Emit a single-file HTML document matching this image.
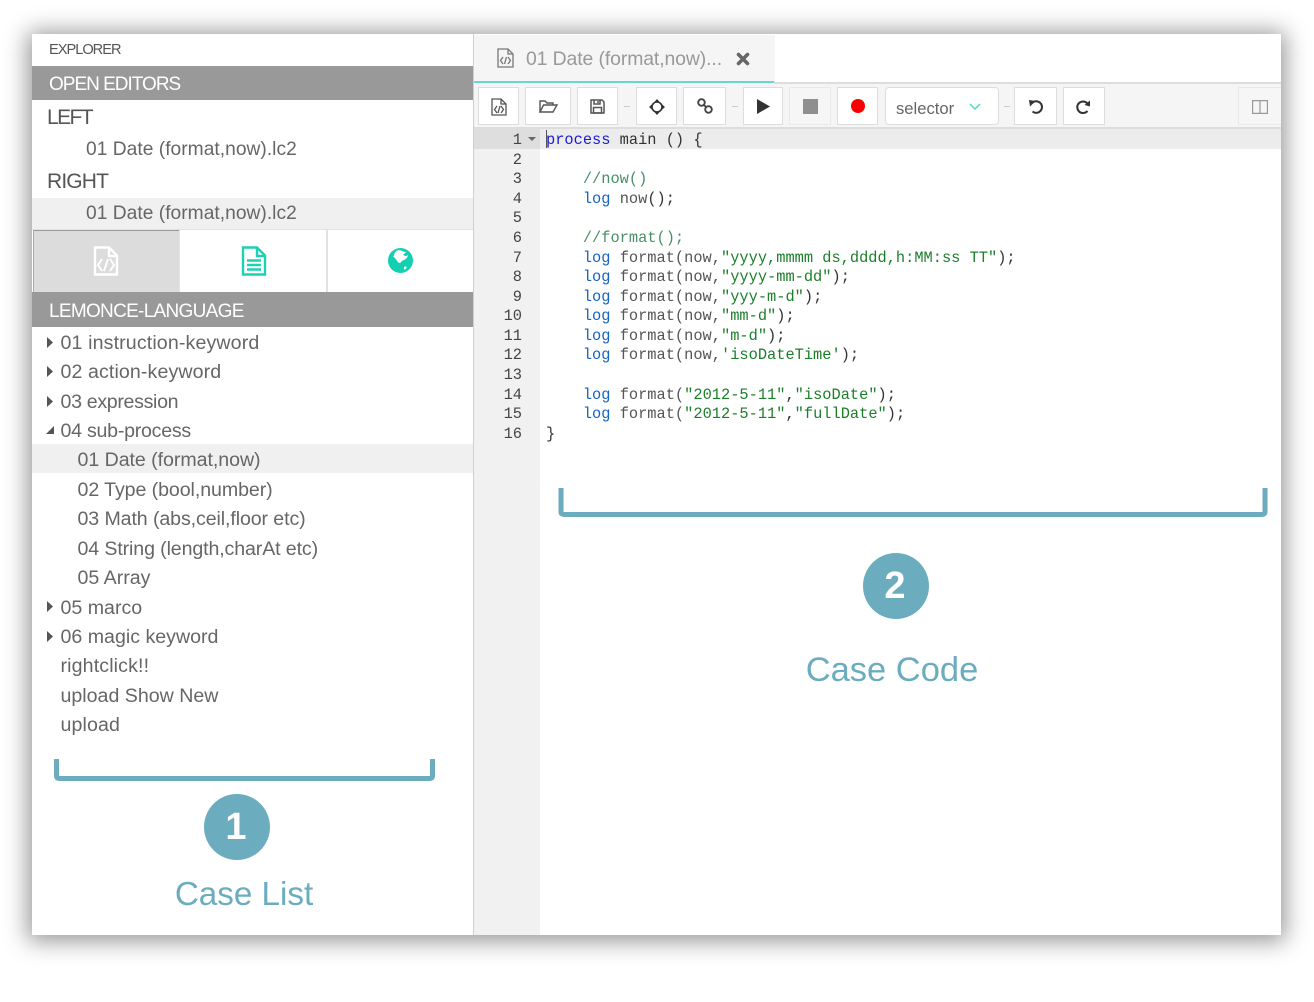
<!DOCTYPE html>
<html><head><meta charset="utf-8">
<style>
html,body{margin:0;padding:0;background:#fff;width:1314px;height:1002px;overflow:hidden}
#root{position:absolute;left:0;top:0;width:1314px;height:1002px;overflow:hidden;font-family:"Liberation Sans",sans-serif}
#panel{position:absolute;left:32px;top:34px;width:1249px;height:901px;background:#fff;box-shadow:0 2px 22px 4px rgba(0,0,0,.42);}
.a{position:absolute}
.t{position:absolute;white-space:nowrap;line-height:30px;height:30px;color:#666;font-size:19.6px;filter:blur(.3px)}
.h{color:#fff;font-size:19px;letter-spacing:-.75px}
.b{position:absolute;top:87px;height:36px;background:#fff;border:1px solid #ddd}
.b.d{background:#f6f6f6;border-color:#e9e9e9}
.dash{position:absolute;top:106px;width:6px;height:1px;background:#ccc}
.ln{position:absolute;width:48px;left:474px;text-align:right;font:15.35px/20px "Liberation Mono",monospace;color:#444;white-space:pre;filter:blur(.3px)}
.c{position:absolute;left:546px;font:15.35px/20px "Liberation Mono",monospace;color:#333;white-space:pre;filter:blur(.3px)}
.k{color:#1a1ad6}.l{color:#1565c0}.s{color:#1b7f2a}.m{color:#4a8f66}.n{color:#555}
svg{position:absolute;overflow:visible}
</style></head><body><div id="root">
<div id="panel"></div>

<!-- sidebar -->
<div class="a" style="left:473px;top:34px;width:1px;height:901px;background:#cfcfcf"></div>
<div class="t" style="left:49px;top:35px;font-size:14.6px;letter-spacing:-1px;color:#555">EXPLORER</div>
<div class="a" style="left:32px;top:66px;width:441px;height:34px;background:#999"></div>
<div class="t h" style="left:49px;top:70px;letter-spacing:-1px">OPEN EDITORS</div>
<div class="t" style="left:47px;top:103px;font-size:21px;letter-spacing:-1.6px;color:#555">LEFT</div>
<div class="t" style="left:86px;top:135px;font-size:19.2px;letter-spacing:.03px">01 Date (format,now).lc2</div>
<div class="t" style="left:47px;top:167px;font-size:21px;letter-spacing:-.85px;color:#555">RIGHT</div>
<div class="a" style="left:32px;top:198px;width:441px;height:31px;background:#f0f0f0"></div>
<div class="t" style="left:86px;top:199px;font-size:19.2px;letter-spacing:.03px">01 Date (format,now).lc2</div>
<div class="a" style="left:32px;top:229px;width:441px;height:1px;background:#e2e2e2"></div>

<div class="a" style="left:33px;top:230px;width:146px;height:62px;background:#dcdcdc;border-left:1px solid #aaa;border-top:1px solid #999;box-sizing:border-box"></div>
<div class="a" style="left:179px;top:230px;width:1px;height:62px;background:#e4e4e4"></div>
<div class="a" style="left:326px;top:230px;width:2px;height:62px;background:#e2e2e2"></div>

<svg style="left:93px;top:246px" width="26" height="30" viewBox="0 0 26 30" fill="none" stroke="#fff" stroke-width="2.400"><path d="M2 1.500H16L24 9.500V28.500H2Z"/><path d="M16 2V10H24"/><path d="M9 13L5 19L9 25M17 13L21 19L17 25M15 13L11 25" stroke-width="2"/></svg>
<svg style="left:241px;top:246px" width="26" height="30" viewBox="0 0 26 30" fill="none" stroke="#1ed1b3" stroke-width="2.400"><path d="M2 1.500H16L24 9.500V28.500H2Z"/><path d="M16 2V10H24"/><path d="M6 14.500H20M6 19H20M6 23.500H20" stroke-width="2.400"/></svg>
<svg style="left:388px;top:248px" width="25" height="25" viewBox="0 0 25 25"><circle cx="12.500" cy="12.500" r="12.500" fill="#14cfb0"/><path d="M9 2.500C13 1.500 15 4 18 4L15 7C17 8 19 8.500 19.500 7C21 8.500 17 12 15 12.500C12 13 14 15 11.500 15C9.500 15 8 10 5.500 9C6 6 7 4 9 2.500ZM16 19C18 18 19.500 18.500 18 20.500C17 22 15.500 22 16 19Z" fill="#fff"/></svg>

<div class="a" style="left:32px;top:292px;width:441px;height:35px;background:#999"></div>
<div class="t h" style="left:49px;top:297px;letter-spacing:-.7px">LEMONCE-LANGUAGE</div>

<div class="a" style="left:32px;top:444px;width:441px;height:29px;background:#f0f0f0"></div>
<div class="t" style="left:60.500px;top:328px;letter-spacing:.13px">01 instruction-keyword</div>
<div class="t" style="left:60.500px;top:357px;letter-spacing:.1px">02 action-keyword</div>
<div class="t" style="left:60.500px;top:387px;letter-spacing:-.33px">03 expression</div>
<div class="t" style="left:60.500px;top:416px;letter-spacing:-.25px">04 sub-process</div>
<div class="t" style="left:77.500px;top:445px;letter-spacing:-.05px">01 Date (format,now)</div>
<div class="t" style="left:77.500px;top:475px;letter-spacing:-.08px">02 Type (bool,number)</div>
<div class="t" style="left:77.500px;top:504px;letter-spacing:-.1px">03 Math (abs,ceil,floor etc)</div>
<div class="t" style="left:77.500px;top:534px;letter-spacing:-.12px">04 String (length,charAt etc)</div>
<div class="t" style="left:77.500px;top:563px">05 Array</div>
<div class="t" style="left:60.500px;top:593px">05 marco</div>
<div class="t" style="left:60.500px;top:622px">06 magic keyword</div>
<div class="t" style="left:60.500px;top:651px;letter-spacing:.13px">rightclick!!</div>
<div class="t" style="left:60.500px;top:681px">upload Show New</div>
<div class="t" style="left:60.500px;top:710px;letter-spacing:.1px">upload</div>
<svg style="left:46px;top:336px" width="9" height="400" fill="#555"><path d="M1 1L7 6.500L1 12Z"/><path d="M1 30L7 35.500L1 41Z"/><path d="M1 60L7 65.500L1 71Z"/><path d="M0 98L8 98L8 90Z"/><path d="M1 265L7 270.500L1 276Z"/><path d="M1 295L7 300.500L1 306Z"/></svg>

<!-- tab -->
<div class="a" style="left:474px;top:35px;width:301px;height:47px;background:#f5f5f5"></div>
<div class="a" style="left:474px;top:81px;width:300px;height:2px;background:#62dcc8"></div>
<div class="a" style="left:774px;top:82px;width:507px;height:2px;background:#ddd"></div>
<svg style="left:497px;top:48px" width="17" height="20" viewBox="0 0 17 20" fill="none" stroke="#777" stroke-width="1.300"><path d="M1 1H11L16 6V19H1Z"/><path d="M11 1V6H16"/><path d="M6 9L3.500 12.500L6 16M11 9L13.500 12.500L11 16M9.500 9L7.500 16"/></svg>
<div class="t" style="left:526px;top:44px;font-size:19.4px;color:#999;letter-spacing:-.1px">01 Date (format,now)...</div>
<svg style="left:736px;top:52px" width="14" height="14" viewBox="0 0 14 14" stroke="#666" stroke-width="3.600" stroke-linecap="round"><path d="M2.500 2.500L11.500 11.500M11.500 2.500L2.500 11.500"/></svg>

<!-- toolbar -->
<div class="a" style="left:474px;top:84px;width:807px;height:43px;background:#f5f5f5"></div>
<div class="a" style="left:474px;top:127px;width:807px;height:2px;background:#ddd"></div>
<div class="b" style="left:478px;width:39px"></div>
<div class="b" style="left:525px;width:44px"></div>
<div class="b" style="left:577px;width:39px"></div>
<div class="dash" style="left:624px"></div>
<div class="b" style="left:636px;width:39px"></div>
<div class="b" style="left:683px;width:41px"></div>
<div class="dash" style="left:732px"></div>
<div class="b" style="left:743px;width:38px"></div>
<div class="b d" style="left:789px;width:40px"></div>
<div class="b" style="left:837px;width:39px"></div>
<div class="b" style="left:885px;width:112px;border-radius:4px"></div>
<div class="dash" style="left:1004px"></div>
<div class="b" style="left:1014px;width:41px"></div>
<div class="b" style="left:1063px;width:40px"></div>
<div class="b d" style="left:1238px;width:42px;border-right:0"></div>

<svg style="left:491px;top:98px" width="16" height="18" viewBox="0 0 16 18" fill="none" stroke="#555" stroke-width="1.300"><path d="M1 1H10L15 6V17H1Z"/><path d="M10 1V6H15"/><path d="M6 8L3.500 11.500L6 15M10 8L12.500 11.500L10 15M9 8L7 15"/></svg>
<svg style="left:539px;top:99px" width="19" height="15" viewBox="0 0 19 15" fill="none" stroke="#555" stroke-width="1.400"><path d="M1 13V2H6L8 4H14V6"/><path d="M1 13H14L18 6H4.500Z"/></svg>
<svg style="left:590px;top:99px" width="15" height="15" viewBox="0 0 15 15" fill="none" stroke="#555" stroke-width="1.500"><path d="M1 1H12L14 3V14H1Z"/><path d="M4 1V5H10V1"/><path d="M3.500 8.500H11.500V14H3.500Z"/><path d="M8 2V4" /></svg>
<svg style="left:648.500px;top:98.500px" width="16" height="16" viewBox="0 0 16 16" fill="none" stroke="#333" stroke-width="1.600"><circle cx="8" cy="8" r="5"/><path d="M8 0L4.800 3.600H11.200ZM8 16L4.800 12.400H11.200ZM0 8L3.600 4.800V11.200ZM16 8L12.400 4.800V11.200Z" fill="#333" stroke="none"/></svg>
<svg style="left:697px;top:98px" width="16" height="16" viewBox="0 0 16 16" fill="none" stroke="#444" stroke-width="1.900"><circle cx="4.500" cy="4.500" r="3.300"/><circle cx="11.500" cy="11.500" r="3.300"/><path d="M6.500 6.500L9.500 9.500"/></svg>
<svg style="left:757px;top:99px" width="13" height="15" viewBox="0 0 13 15"><path d="M0 0L13 7.500L0 15Z" fill="#333"/></svg>
<div class="a" style="left:803px;top:99px;width:15px;height:15px;background:#8f8f8f"></div>
<div class="a" style="left:851px;top:99px;width:14px;height:14px;border-radius:50%;background:#f80000"></div>
<div class="t" style="left:896px;top:94px;font-size:16.6px;color:#666">selector</div>
<svg style="left:969px;top:103px" width="12" height="8" viewBox="0 0 12 8" fill="none" stroke="#4fd9c1" stroke-width="1.500"><path d="M1 1L6 6L11 1"/></svg>
<svg style="left:1028px;top:99px" width="16" height="16" viewBox="0 0 16 16" fill="none" stroke="#333" stroke-width="2"><path d="M4 4A5.800 5.800 0 1 1 4.500 12.500"/><path d="M1 1L7.500 2L2 7.500Z" fill="#333" stroke="none"/></svg>
<svg style="left:1075px;top:99px" width="16" height="16" viewBox="0 0 16 16" fill="none" stroke="#333" stroke-width="2"><path d="M12.500 4.500A5.800 5.800 0 1 0 12.500 12"/><path d="M15 1.500L15 7.500L9.500 6Z" fill="#333" stroke="none"/></svg>
<svg style="left:1252px;top:100px" width="16" height="14" viewBox="0 0 16 14" fill="none" stroke="#999" stroke-width="1.200"><path d="M.6.600H15.400V13.400H.6ZM8 .6V13.400"/></svg>

<!-- gutter / code -->
<div class="a" style="left:474px;top:129px;width:66px;height:806px;background:#f1f1f1"></div>
<div class="a" style="left:474px;top:129px;width:66px;height:20px;background:#dedede"></div>
<div class="a" style="left:540px;top:129px;width:741px;height:20px;background:#ececec"></div>
<div class="a" style="left:546px;top:130px;width:1px;height:18px;background:#555"></div>
<svg style="left:528px;top:137px" width="8" height="5"><path d="M0 0H8L4 4Z" fill="#666"/></svg>

<div class="ln" style="top:130px">1</div><div class="ln" style="top:150px">2</div><div class="ln" style="top:169px">3</div><div class="ln" style="top:189px">4</div><div class="ln" style="top:208px">5</div><div class="ln" style="top:228px">6</div><div class="ln" style="top:248px">7</div><div class="ln" style="top:267px">8</div><div class="ln" style="top:287px">9</div><div class="ln" style="top:306px">10</div><div class="ln" style="top:326px">11</div><div class="ln" style="top:345px">12</div><div class="ln" style="top:365px">13</div><div class="ln" style="top:385px">14</div><div class="ln" style="top:404px">15</div><div class="ln" style="top:424px">16</div>

<div class="c" style="top:130px"><span class="k">process</span> main () {</div>
<div class="c" style="top:169px">    <span class="m">//now()</span></div>
<div class="c" style="top:189px">    <span class="l">log</span> <span class="n">now</span>();</div>
<div class="c" style="top:228px">    <span class="m">//format();</span></div>
<div class="c" style="top:248px">    <span class="l">log</span> <span class="n">format(now,</span><span class="s">"yyyy,mmmm ds,dddd,h:MM:ss TT"</span>);</div>
<div class="c" style="top:267px">    <span class="l">log</span> <span class="n">format(now,</span><span class="s">"yyyy-mm-dd"</span>);</div>
<div class="c" style="top:287px">    <span class="l">log</span> <span class="n">format(now,</span><span class="s">"yyy-m-d"</span>);</div>
<div class="c" style="top:306px">    <span class="l">log</span> <span class="n">format(now,</span><span class="s">"mm-d"</span>);</div>
<div class="c" style="top:326px">    <span class="l">log</span> <span class="n">format(now,</span><span class="s">"m-d"</span>);</div>
<div class="c" style="top:345px">    <span class="l">log</span> <span class="n">format(now,</span><span class="s">'isoDateTime'</span>);</div>
<div class="c" style="top:385px">    <span class="l">log</span> <span class="n">format(</span><span class="s">"2012-5-11"</span>,<span class="s">"isoDate"</span>);</div>
<div class="c" style="top:404px">    <span class="l">log</span> <span class="n">format(</span><span class="s">"2012-5-11"</span>,<span class="s">"fullDate"</span>);</div>
<div class="c" style="top:424px">}</div>

<!-- annotations -->
<svg style="left:0;top:0" width="1314" height="1002" fill="none" stroke="#6badbf" stroke-width="5"><path d="M56.500 759V776Q56.500 778.500 59 778.500H430Q432.500 778.500 432.500 776V759"/><path d="M561 488V512Q561 514.500 564 514.500H1262Q1265 514.500 1265 512V488"/></svg>
<div class="a" style="left:204px;top:794px;width:66px;height:66px;border-radius:50%;background:#6badbf;color:#fff;text-align:center;font:bold 38px/66px 'Liberation Sans',sans-serif;text-indent:-2px">1</div>
<div class="a" style="left:863px;top:553px;width:66px;height:66px;border-radius:50%;background:#6badbf;color:#fff;text-align:center;font:bold 38px/66px 'Liberation Sans',sans-serif;text-indent:-2px">2</div>
<div class="a" style="left:94px;top:872px;width:300px;text-align:center;color:#6badbf;font-size:33.200px;line-height:46px;white-space:nowrap">Case List</div>
<div class="a" style="left:742px;top:647px;width:300px;text-align:center;color:#6badbf;font-size:34.500px;line-height:46px;white-space:nowrap">Case Code</div>
</div></body></html>
